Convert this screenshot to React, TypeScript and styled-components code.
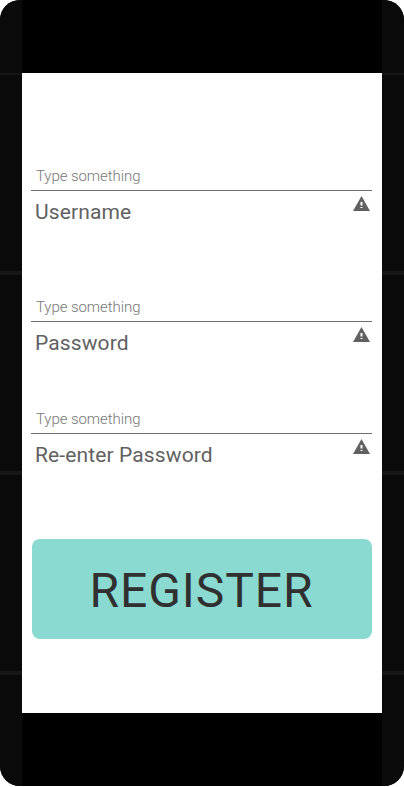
import React from "react";
import styled, { createGlobalStyle } from "styled-components";

const GlobalStyle = createGlobalStyle`
  body {
    margin: 0;
    background: #fff;
    font-family: Roboto, "Liberation Sans", sans-serif;
  }
`;

const Phone = styled.div`
  display: grid;
  grid-template-columns: 22px 360px 22px;
  width: 404px;
  height: 786px;
  border-radius: 20px;
  overflow: hidden;
  background: #000;
`;

const Bezel = styled.div`
  display: flex;
  flex-direction: column;
  background: #0a0a0a;
`;

const Seam = styled.div<{ $gap: number; $height: number }>`
  margin-top: ${(p) => p.$gap}px;
  height: ${(p) => p.$height}px;
  background: #171717;
`;

const Screen = styled.main`
  display: flex;
  flex-direction: column;
  box-sizing: border-box;
  height: 640px;
  margin-top: 73px;
  padding: 92px 10px 0 9px;
  background: #fff;
`;

const Field = styled.div<{ $after: number }>`
  height: 60px;
  margin-bottom: ${(p) => p.$after}px;
`;

const Input = styled.input`
  display: block;
  box-sizing: border-box;
  width: 341px;
  height: 26px;
  padding: 0 5px 4px;
  border: 0;
  border-bottom: 1px solid #6d6d6d;
  border-radius: 0;
  outline: 0;
  background: transparent;
  font-family: inherit;
  font-size: 15px;
  font-weight: 300;
  letter-spacing: -0.07px;
  color: #333;
  &::placeholder {
    color: #767676;
    opacity: 1;
  }
`;

const Caption = styled.div`
  display: flex;
  justify-content: space-between;
  padding: 5px 2px 0 4px;
`;

const Label = styled.label`
  margin-top: 1px;
  font-size: 21px;
  line-height: 30px;
  letter-spacing: 0.12px;
  color: #616161;
`;

const Warning = styled.svg`
  width: 17px;
  height: 15px;
`;

const RegisterButton = styled.button`
  flex: none;
  width: 340px;
  height: 100px;
  margin-left: 1px;
  padding: 4px 1px 0 0;
  border: 0;
  border-radius: 8px;
  background: #8bdad2;
  color: #303030;
  font-family: inherit;
  font-size: 48px;
  line-height: 56px;
  letter-spacing: 0.9px;
`;

const seams = [
  { gap: 73, height: 2 },
  { gap: 196, height: 4 },
  { gap: 196, height: 4 },
  { gap: 196, height: 4 },
];

const fields = [
  { id: "username", label: "Username", type: "text", after: 71 },
  { id: "password", label: "Password", type: "password", after: 52 },
  { id: "confirm", label: "Re-enter Password", type: "password", after: 71 },
];

function Side() {
  return (
    <Bezel>
      {seams.map((s, i) => (
        <Seam key={i} $gap={s.gap} $height={s.height} />
      ))}
    </Bezel>
  );
}

export default function App() {
  return (
    <>
      <GlobalStyle />
      <Phone>
        <Side />
        <Screen>
          {fields.map((f) => (
            <Field key={f.id} $after={f.after}>
              <Input id={f.id} type={f.type} placeholder="Type something" />
              <Caption>
                <Label htmlFor={f.id}>{f.label}</Label>
                <Warning viewBox="0 0 17 15">
                  <path
                    fill="#616161"
                    fillRule="evenodd"
                    d="M8.5 0 L17 15 H0 Z M7.5 6 V9.5 H9.5 V6 Z M7.5 11 V12 H9.5 V11 Z"
                  />
                </Warning>
              </Caption>
            </Field>
          ))}
          <RegisterButton type="button">REGISTER</RegisterButton>
        </Screen>
        <Side />
      </Phone>
    </>
  );
}
